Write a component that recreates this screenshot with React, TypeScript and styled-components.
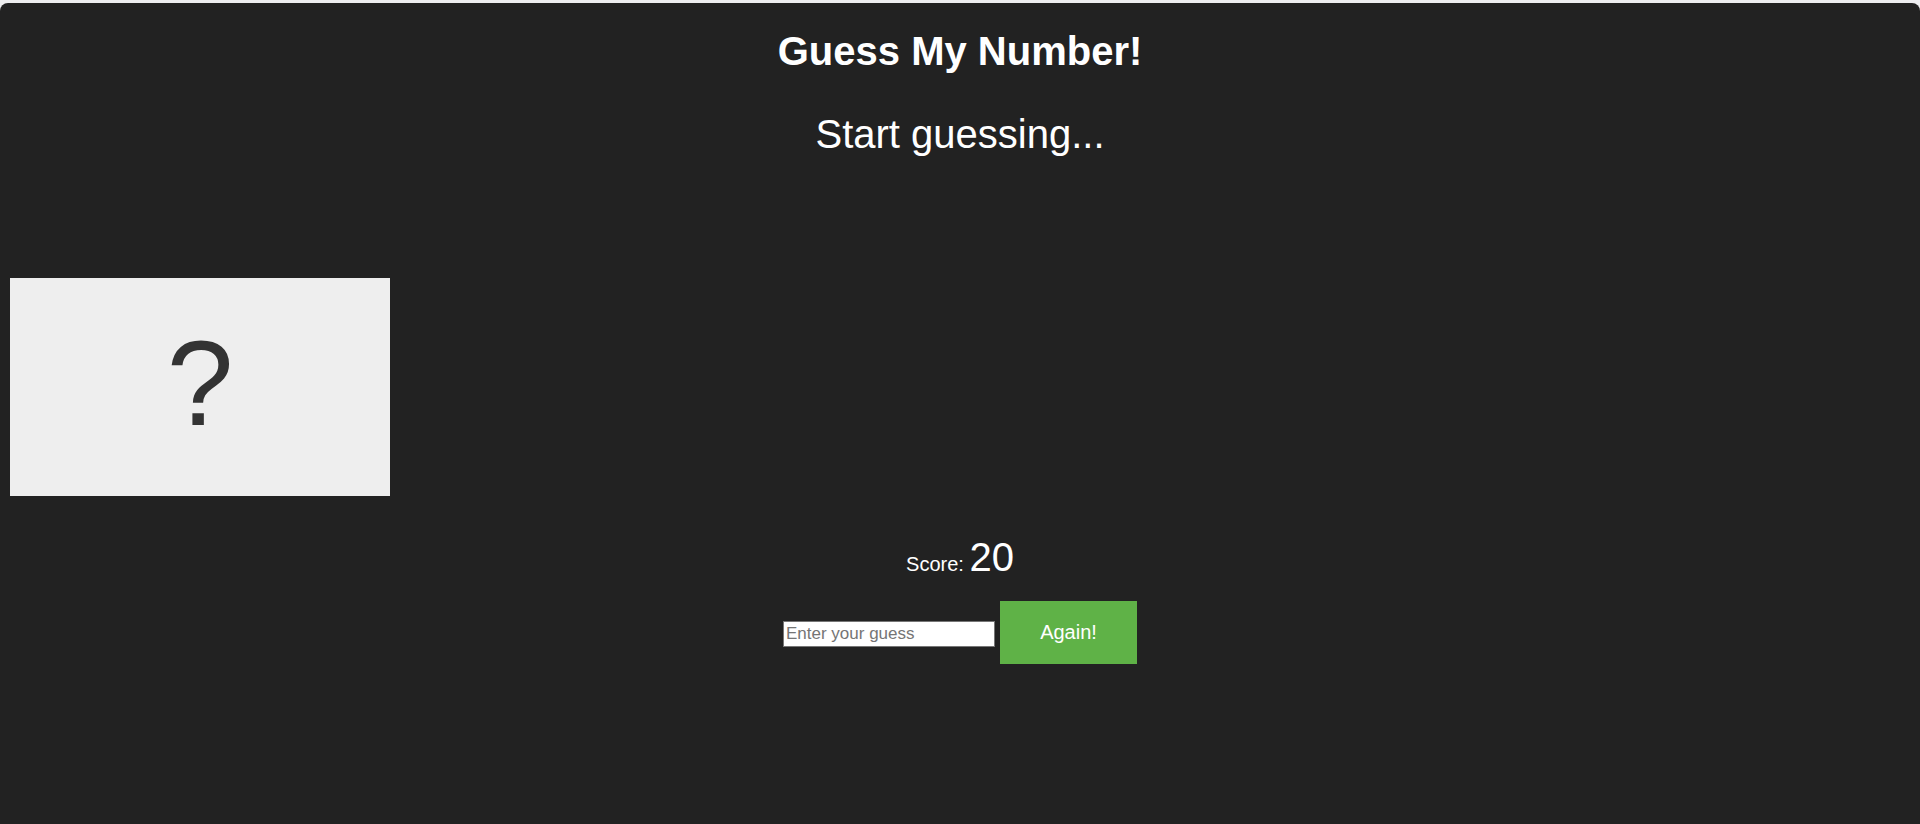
import React from "react";
import styled, { createGlobalStyle } from "styled-components";

const Global = createGlobalStyle`
  html, body { margin: 0; padding: 0; }
  body {
    background: #eeeef0;
    font-family: "Liberation Sans", Arial, sans-serif;
  }
`;

const Page = styled.main`
  margin-top: 3px;
  min-height: calc(100vh - 3px);
  background: #222222;
  border-radius: 8px 8px 0 0;
  color: #ffffff;
  display: flex;
  flex-direction: column;
  padding-top: 25px;
  box-sizing: border-box;
`;

const Title = styled.h1`
  margin: 0;
  font-size: 40px;
  font-weight: 700;
  line-height: 46px;
  text-align: center;
`;

const Message = styled.p`
  margin: 37px 0 0;
  font-size: 40px;
  line-height: 46px;
  text-align: center;
`;

const NumberBox = styled.div`
  margin: 121px 0 0 10px;
  align-self: flex-start;
  width: 300px;
  height: 138px;
  padding: 36px 40px 44px;
  background: #eeeeee;
  color: #333333;
  font-size: 120px;
  line-height: 138px;
  text-align: center;
`;

const ScoreLine = styled.p`
  margin: 38px 0 0;
  text-align: center;
  line-height: 46px;
`;

const ScoreLabel = styled.span`
  font-size: 20px;
`;

const ScoreValue = styled.span`
  font-size: 40px;
`;

const Controls = styled.div`
  margin-top: 12px;
  display: flex;
  justify-content: center;
  align-items: center;
  gap: 5px;
`;

const GuessInput = styled.input`
  width: 212px;
  height: 26px;
  box-sizing: border-box;
  padding: 1px 2px;
  border: 1px solid #767676;
  background: #ffffff;
  font-family: "Liberation Sans", Arial, sans-serif;
  font-size: 17px;
  color: #222;
  margin-top: 3px;
  &::placeholder { color: #757575; }
`;

const AgainButton = styled.button`
  width: 137px;
  height: 63px;
  border: none;
  background: #5fb247;
  color: #ffffff;
  font-family: "Liberation Sans", Arial, sans-serif;
  font-size: 20px;
  cursor: pointer;
`;

export default function App() {
  return (
    <>
      <Global />
      <Page>
        <Title>Guess My Number!</Title>
        <Message>Start guessing...</Message>
        <NumberBox>?</NumberBox>
        <ScoreLine>
          <ScoreLabel>Score: </ScoreLabel>
          <ScoreValue>20</ScoreValue>
        </ScoreLine>
        <Controls>
          <GuessInput type="number" placeholder="Enter your guess" />
          <AgainButton>Again!</AgainButton>
        </Controls>
      </Page>
    </>
  );
}
